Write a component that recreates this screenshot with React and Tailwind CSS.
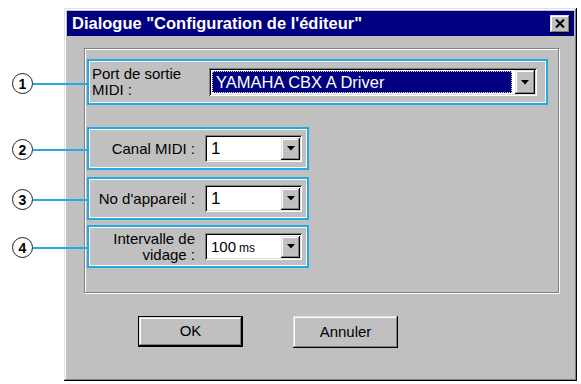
import React from "react";

const raised =
  "shadow-[inset_-1px_-1px_#000,inset_1px_1px_#dfdfdf,inset_-2px_-2px_#808080,inset_2px_2px_#fff]";
const sunken =
  "shadow-[inset_1px_1px_#808080,inset_-1px_-1px_#fff,inset_2px_2px_#000,inset_-2px_-2px_#dfdfdf]";

function Arrow() {
  return (
    <svg width="8" height="5" viewBox="0 0 8 5">
      <path d="M0 0H8L4 4.5Z" fill="#000" />
    </svg>
  );
}

function DropBtn({ w = "w-[19px]", h = "h-[22px]" }) {
  return (
    <div className={`${w} ${h} bg-[#c0c0c0] ${raised} flex items-center justify-center shrink-0`}>
      <Arrow />
    </div>
  );
}

function Combo({ children }) {
  return (
    <div className={`ml-[10px] w-[97px] h-[27px] bg-white ${sunken} flex items-center justify-between pl-[6px] pr-[2px]`}>
      <div className="text-[17px] text-black leading-none">{children}</div>
      <DropBtn />
    </div>
  );
}

function Callout({ n, top }) {
  return (
    <div className={`absolute left-[12px] ${top} flex items-center`}>
      <div className="w-[21px] h-[21px] rounded-full border-[1.5px] border-[#1e1e1e] bg-white flex items-center justify-center text-[14px] font-bold text-black leading-none">
        {n}
      </div>
      <div className="w-[54px] h-[2px] bg-[#25a9e0]" />
    </div>
  );
}

const cyanBox = "border-2 border-[#25a9e0] shadow-[inset_0_0_0_1px_#fff]";

export default function App() {
  return (
    <div className="relative w-[581px] h-[384px] bg-white overflow-hidden font-['Liberation_Sans',Arial,sans-serif]">
      <div className={`ml-[64px] mt-[8px] w-[513px] h-[373px] bg-[#c0c0c0] p-[3px] flex flex-col ${raised}`}>
        <div className="h-[25px] bg-[#000080] flex items-center justify-between pl-[5px] pr-[4px] shrink-0">
          <div className="text-[16.5px] font-bold text-white leading-none">
            Dialogue "Configuration de l'éditeur"
          </div>
          <div className={`w-[20px] h-[18px] bg-[#c0c0c0] ${raised} flex items-center justify-center`}>
            <svg width="10" height="9" viewBox="0 0 10 9">
              <path d="M1 0.5L9 8.5M9 0.5L1 8.5" stroke="#000" strokeWidth="2" />
            </svg>
          </div>
        </div>

        <div className="flex-1 flex flex-col pl-[17px] pt-[12px]">
          <div className="w-[475px] h-[245px] border border-[#808080] shadow-[inset_1px_1px_#fff,1px_1px_#fff] pl-[2px] pt-[10px] flex flex-col">
            <div className={`w-[461px] h-[46px] ${cyanBox} flex items-center pl-[3px]`}>
              <div className="w-[117px] text-[15px] leading-[16px] text-black">
                Port de sortie
                <br />
                MIDI :
              </div>
              <div className={`w-[328px] h-[28px] bg-white ${sunken} flex items-center justify-between pl-[3px] pr-[2px]`}>
                <div className="flex-1 h-[22px] mr-[3px] bg-[#000080] border border-dotted border-[#e8e8c0] flex items-center pl-[3px]">
                  <span className="text-[16.5px] text-white leading-none">YAMAHA CBX A Driver</span>
                </div>
                <DropBtn w="w-[20px]" h="h-[24px]" />
              </div>
            </div>

            <div className={`mt-[22px] w-[222px] h-[43px] ${cyanBox} flex items-center`}>
              <div className="w-[106px] text-right text-[15px] leading-[16px] text-black">Canal MIDI :</div>
              <Combo>1</Combo>
            </div>

            <div className={`mt-[7px] w-[222px] h-[43px] ${cyanBox} flex items-center`}>
              <div className="w-[106px] text-right text-[15px] leading-[16px] text-black whitespace-nowrap">No d'appareil :</div>
              <Combo>1</Combo>
            </div>

            <div className={`mt-[5px] w-[222px] h-[43px] ${cyanBox} flex items-center`}>
              <div className="w-[106px] text-right text-[15px] leading-[16px] text-black">
                Intervalle de
                <br />
                vidage :
              </div>
              <Combo>
                <span className="text-[15px]">100</span>
                <span className="text-[12px] ml-[3px]">ms</span>
              </Combo>
            </div>
          </div>

          <div className="mt-[23px] ml-[54px] flex items-start">
            <div className="w-[105px] h-[31px] border border-black">
              <div className={`w-full h-full bg-[#c0c0c0] ${raised} flex items-center justify-center text-[15px] text-black`}>
                OK
              </div>
            </div>
            <div className={`ml-[50px] w-[105px] h-[32px] bg-[#c0c0c0] ${raised} flex items-center justify-center text-[15px] text-black`}>
              Annuler
            </div>
          </div>
        </div>
      </div>

      <Callout n="1" top="top-[73px]" />
      <Callout n="2" top="top-[139px]" />
      <Callout n="3" top="top-[189px]" />
      <Callout n="4" top="top-[237px]" />
    </div>
  );
}
